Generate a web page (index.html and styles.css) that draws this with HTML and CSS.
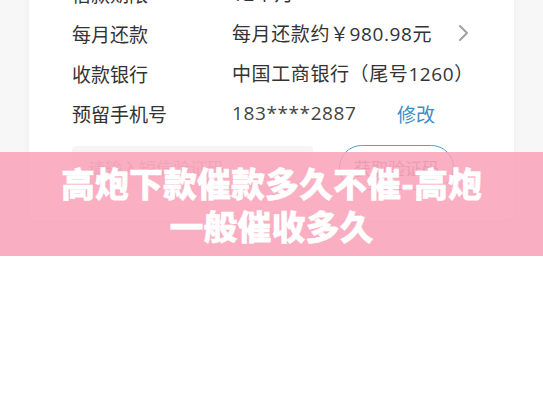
FILE: index.html
```html
<!DOCTYPE html>
<html lang="zh-CN">
  <head>
    <meta charset="UTF-8" />
    <meta name="viewport" content="width=device-width, initial-scale=1.0" />
    <title>高炮下款催款多久不催</title>
    <link rel="stylesheet" href="styles.css">
  </head>

  <body>
    <div class="shot">
      <div class="card">
        <div class="row">
          <span class="label">借款期限</span>
          <span class="value">12个月</span>
        </div>
        <div class="row">
          <span class="label">每月还款</span>
          <span class="value">每月还款约￥980.98元</span>
          <svg class="arrow" width="12" height="18" viewBox="0 0 12 18">
            <path d="M2 2 L9 9 L2 16" fill="none" stroke="#a0a0a0" stroke-width="2" stroke-linecap="round" stroke-linejoin="round" />
          </svg>
        </div>
        <div class="row">
          <span class="label">收款银行</span>
          <span class="value">中国工商银行（尾号1260）</span>
        </div>
        <div class="row">
          <span class="label">预留手机号</span>
          <span class="value phone">183****2887</span>
          <span class="edit">修改</span>
        </div>
        <div class="code-row">
          <div class="code-input">请输入短信验证码</div>
          <button class="code-btn">获取验证码</button>
        </div>
      </div>

      <div class="banner">
        <h1>高炮下款催款多久不催-高炮<br />一般催收多久</h1>
      </div>
    </div>
  </body>
</html>
```

FILE: styles.css
```css
body {
  margin: 0;
  background: #ffffff;
  font-family: "Noto Sans CJK SC", "Noto Sans", sans-serif;
}

.shot {
  position: relative;
  height: 256px;
  overflow: hidden;
  background: #f7f7f7;
}

.card {
  margin: -27px 29px 0 29px;
  padding: 0 0 30px 43px;
  background: #ffffff;
  border-radius: 8px;
  box-shadow: 0 2px 8px rgba(0, 0, 0, 0.05);
}

.row {
  display: flex;
  align-items: center;
  height: 40px;
  font-size: 19px;
  color: #333333;
}

.label {
  width: 160px;
  flex-shrink: 0;
}

.value {
  font-family: "Open Sans", "Noto Sans CJK SC", sans-serif;
  letter-spacing: 0.6px;
}

.phone {
  width: 165px;
  color: #444444;
}

.arrow {
  margin-left: 26px;
}

.edit {
  color: #3b8ec8;
}

.code-row {
  display: flex;
  align-items: center;
  margin-top: 12px;
}

.code-input {
  width: 225px;
  height: 44px;
  padding-left: 16px;
  line-height: 44px;
  background: #f5f5f5;
  border-radius: 4px;
  font-size: 17px;
  color: #b0b0b0;
}

.code-btn {
  margin-left: 26px;
  width: 115px;
  height: 45px;
  border: 1.5px solid #4ea3d6;
  border-radius: 23px;
  background: #ffffff;
  font-family: inherit;
  font-size: 17px;
  color: #8a7c9a;
}

.banner {
  position: absolute;
  left: 0;
  right: 0;
  top: 152px;
  height: 104px;
  display: flex;
  align-items: center;
  justify-content: center;
  background: rgba(249, 162, 184, 0.86);
}

.banner h1 {
  margin: 0;
  font-size: 34px;
  font-weight: 900;
  line-height: 43px;
  color: #ffffff;
  text-align: center;
  -webkit-text-stroke: 0.4px #ffffff;
}
```
